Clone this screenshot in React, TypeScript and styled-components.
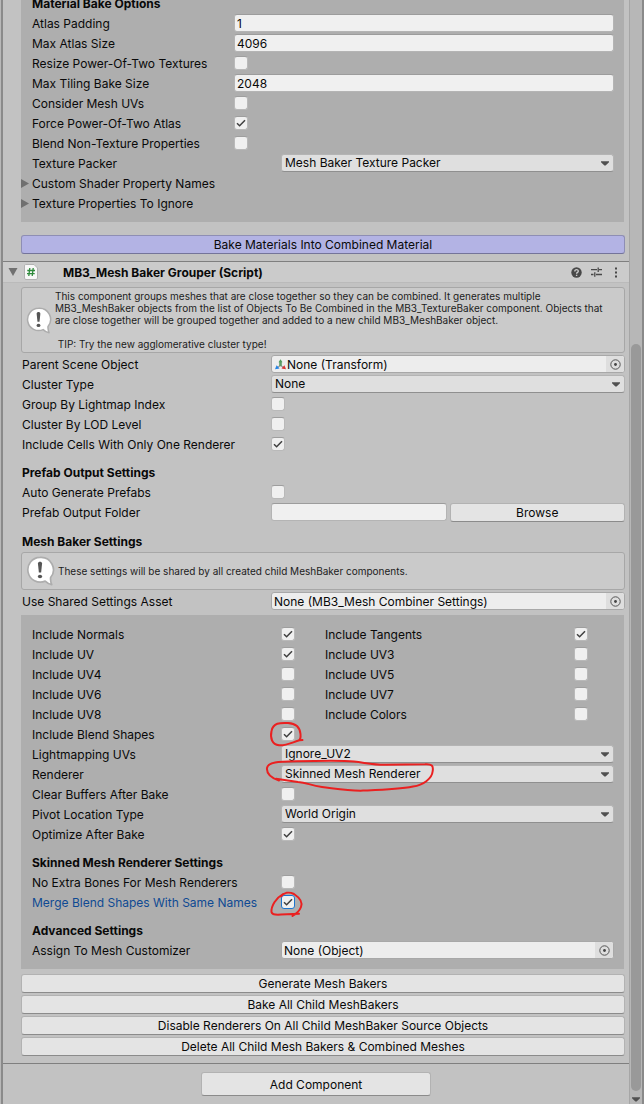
import React, { useId, useState } from "react";
import styled, { createGlobalStyle } from "styled-components";

const GlobalStyle = createGlobalStyle`
  * { box-sizing: border-box; }
  body {
    margin: 0;
    background: #c2c2c2;
    color: #090909;
    font: 12px/18px Inter, "Liberation Sans", sans-serif;
  }
  button, input, select { font: inherit; color: inherit; margin: 0; }
`;

const Window = styled.div`
  display: flex;
  min-height: 100vh;
  overflow: hidden;
  border-left: 1px solid #b8b8b8;
  border-right: 2px solid #8a8a8a;
`;

const Inspector = styled.main`
  flex: 1;
  min-width: 0;
  border-left: 2px solid #8a8a8a;
`;

const Component = styled.section<{ $scrolled?: boolean }>`
  display: flex;
  flex-direction: column;
  gap: 2px;
  margin-top: ${(p) => (p.$scrolled ? "-6px" : "0")};
  padding: 0 4px 7px 18px;
  border-bottom: 1px solid #7f7f7f;
`;

const Box = styled.div<{ $flushTop?: boolean }>`
  display: flex;
  flex-direction: column;
  gap: 2px;
  margin: ${(p) => (p.$flushTop ? "0 1px 11px 0" : "3px 1px 3px 0")};
  padding: ${(p) => (p.$flushTop ? "0 10px 10px 11px" : "10px 10px 10px 11px")};
  background: #aeaeae;
`;

const Loose = styled.div`
  display: flex;
  flex-direction: column;
  gap: 2px;
  padding-left: 1px;
`;

const Heading = styled.h3<{ $spaced?: boolean }>`
  height: 18px;
  margin: ${(p) => (p.$spaced ? "8px 0 0" : "0")};
  padding-top: 1px;
  font-size: 12px;
  font-weight: 700;
  white-space: nowrap;
`;

const Row = styled.div<{ $label?: number }>`
  display: grid;
  grid-template-columns: ${(p) => p.$label ?? 249}px minmax(0, 1fr);
  min-height: 18px;
`;

const Label = styled.label<{ $active?: boolean }>`
  height: 18px;
  padding-top: 1px;
  white-space: nowrap;
  color: ${(p) => (p.$active ? "#0f4a93" : "inherit")};
`;

const TextInput = styled.input`
  width: 100%;
  height: 18px;
  padding: 1px 2px 0;
  border: 1px solid #b4b4b4;
  border-top-color: #9c9c9c;
  border-radius: 3px;
  background: #f0f0f0;
  outline: none;
`;

const Stack = styled.span`
  position: relative;
  display: grid;
  align-items: center;
  justify-items: start;
  > input, > select, > svg { grid-area: 1 / 1; }
  > svg { pointer-events: none; }
`;

const TickInput = styled.input<{ $active?: boolean }>`
  appearance: none;
  width: 14px;
  height: 14px;
  border: 1px solid ${(p) => (p.$active ? "#1c75cf" : "#b9b9b9")};
  border-top-color: ${(p) => (p.$active ? "#1c75cf" : "#9e9e9e")};
  border-radius: 3px;
  background: #f0f0f0;
  outline: none;
`;

const SelectInput = styled.select`
  appearance: none;
  width: 100%;
  height: 18px;
  padding: 0 18px 0 3px;
  border: 1px solid #b4b4b4;
  border-bottom-color: #8f8f8f;
  border-radius: 3px;
  background: #dfdfdf;
  line-height: 16px;
  outline: none;
`;

const SelectArrow = styled.svg`
  justify-self: end;
  margin-right: 5px;
`;

const ObjectFrame = styled.span`
  display: flex;
  align-items: center;
  height: 18px;
  border: 1px solid #a8a8a8;
  border-radius: 3px;
  background: #ededed;
  padding-left: 2px;
  overflow: hidden;
`;

const ObjectInput = styled.input`
  flex: 1;
  min-width: 0;
  height: 16px;
  padding: 1px 0 0;
  border: 0;
  background: none;
  outline: none;
`;

const Picker = styled.button`
  display: grid;
  place-items: center;
  width: 18px;
  height: 16px;
  padding: 0;
  border: 0;
  background: #dedede;
`;

const PushButton = styled.button<{ $tone?: "bake" }>`
  width: 100%;
  height: 19px;
  padding: 0;
  border: 1px solid ${(p) => (p.$tone ? "#8e8eb4" : "#b2b2b2")};
  border-bottom-color: ${(p) => (p.$tone ? "#74749a" : "#8b8b8b")};
  border-radius: 3px;
  background: ${(p) => (p.$tone ? "#b3b3e4" : "#e4e4e4")};
  line-height: 17px;
  white-space: nowrap;
`;

const FolderFields = styled.div`
  display: grid;
  grid-template-columns: 1fr 1fr;
  gap: 3px;
`;

const Foldout = styled.button`
  display: flex;
  align-items: center;
  gap: 3px;
  height: 18px;
  margin-left: -11px;
  padding: 1px 0 0;
  border: 0;
  background: none;
  white-space: nowrap;
`;

const TitleBar = styled.header`
  display: flex;
  align-items: center;
  height: 21px;
  padding: 0 3px 0 5px;
  border-bottom: 1px solid #bababa;
  background: #cbcbcb;
`;

const Title = styled.h2`
  flex: 1;
  margin: 0;
  padding: 2px 0 0 25px;
  font-size: 12px;
  font-weight: 700;
  white-space: nowrap;
`;

const IconButton = styled.button`
  display: grid;
  place-items: center;
  width: 20px;
  height: 18px;
  padding: 0;
  border: 0;
  background: none;
`;

const FoldButton = styled(IconButton)`
  width: 10px;
  margin-right: 6px;
`;

const Help = styled.div<{ $tall?: boolean }>`
  display: flex;
  align-items: center;
  gap: 3px;
  height: ${(p) => (p.$tall ? "66px" : "38px")};
  margin-top: ${(p) => (p.$tall ? "4px" : "0")};
  padding: 0 3px;
  border: 1px solid #a7a7a7;
  border-radius: 3px;
  background: #cacaca;
`;

const HelpText = styled.p`
  margin: 0;
  color: #1c1c1c;
  font-size: 10px;
  line-height: 12px;
  white-space: pre;
`;

const Flags = styled.div`
  display: grid;
  grid-template-columns: 293px minmax(0, 1fr);
  gap: 2px 0;
`;

const Footer = styled.footer`
  display: flex;
  justify-content: center;
  padding: 8px 0;
`;

const AddButton = styled(PushButton)`
  width: 230px;
  height: 24px;
`;

const Track = styled.div`
  display: flex;
  flex-direction: column;
  align-items: center;
  width: 13px;
  border-left: 1px solid #a6a6a6;
  background: #b7b7b7;
`;

const TrackSpace = styled.div`
  flex: 344;
`;

const Thumb = styled.div`
  flex: 747;
  width: 10px;
  border-radius: 5px;
  background: #999;
`;

const TrackArrow = styled.div`
  display: grid;
  place-items: center;
  height: 13px;
  padding-top: 4px;
`;

const Mark = styled.svg`
  && {
    position: absolute;
    z-index: 1;
    left: -16px;
    top: -12px;
    overflow: visible;
    fill: none;
    stroke: #ea2020;
    stroke-width: 2;
    stroke-linecap: round;
    stroke-linejoin: round;
  }
`;

const DownArrow = () => (
  <svg width="8" height="5" viewBox="0 0 8 5" aria-hidden="true">
    <path d="M0 0.3h8v1L4.6 4.6h-1.2L0 1.3z" fill="#505050" />
  </svg>
);

const Bubble = ({ size }: { size: number }) => (
  <svg width={size} height={size} viewBox="0 0 30 32" aria-hidden="true">
    <path
      d="M15 1.5a13.2 13.2 0 1 0 5.5 25.3c2 2 4 3.2 7 3.7c-1-2.500-1.500-5-1.200-7.500A13.200 13.200 0 0 0 15 1.500z"
      fill="#fff"
      stroke="#adadad"
      strokeWidth="1.800"
      strokeLinejoin="round"
    />
    <path d="M12.800 8c0-2.600 4.400-2.600 4.400 0l-1 9.500h-2.400z" fill="#555" />
    <ellipse cx="15" cy="21.800" rx="2.300" ry="1.900" fill="#555" />
  </svg>
);

function Tick({ id, on, active }: { id: string; on?: boolean; active?: boolean }) {
  const [checked, setChecked] = useState(!!on);
  return (
    <>
      <TickInput
        id={id}
        type="checkbox"
        $active={active}
        checked={checked}
        onChange={(e) => setChecked(e.target.checked)}
      />
      {checked && (
        <svg width="14" height="14" viewBox="0 0 14 14" aria-hidden="true">
          <path d="M3 7.300l2.600 2.500L11 4.200" fill="none" stroke="#404040" strokeWidth="1.500" />
        </svg>
      )}
    </>
  );
}

interface ToggleProps {
  label: string;
  on?: boolean;
  active?: boolean;
  labelWidth?: number;
  mark?: React.ReactNode;
}

function Toggle({ label, on, active, labelWidth, mark }: ToggleProps) {
  const id = useId();
  return (
    <Row $label={labelWidth}>
      <Label htmlFor={id} $active={active}>{label}</Label>
      <Stack>
        <Tick id={id} on={on} active={active} />
        {mark}
      </Stack>
    </Row>
  );
}

function TextRow({ label, value, labelWidth }: { label: string; value: string; labelWidth?: number }) {
  const id = useId();
  return (
    <Row $label={labelWidth}>
      <Label htmlFor={id}>{label}</Label>
      <TextInput id={id} defaultValue={value} />
    </Row>
  );
}

function Dropdown({ label, value, mark }: { label: string; value: string; mark?: React.ReactNode }) {
  const id = useId();
  return (
    <Row>
      <Label htmlFor={id}>{label}</Label>
      <Stack>
        <SelectInput id={id} defaultValue={value}>
          <option>{value}</option>
        </SelectInput>
        <SelectArrow width="8" height="5" viewBox="0 0 8 5" aria-hidden="true">
          <path d="M0 0.300h8v1L4.600 4.600h-1.200L0 1.300z" fill="#505050" />
        </SelectArrow>
        {mark}
      </Stack>
    </Row>
  );
}

function ObjectRow({ label, value, icon }: { label: string; value: string; icon?: React.ReactNode }) {
  const id = useId();
  return (
    <Row>
      <Label htmlFor={id}>{label}</Label>
      <ObjectFrame>
        {icon}
        <ObjectInput id={id} value={value} readOnly />
        <Picker type="button" aria-label={`Select ${label}`}>
          <svg width="11" height="11" viewBox="0 0 11 11" aria-hidden="true">
            <circle cx="5.500" cy="5.500" r="4.700" fill="none" stroke="#555" />
            <circle cx="5.500" cy="5.500" r="1.400" fill="#444" />
          </svg>
        </Picker>
      </ObjectFrame>
    </Row>
  );
}

const FoldoutRow = ({ label }: { label: string }) => (
  <Foldout type="button">
    <svg width="8" height="9" viewBox="0 0 8 9" aria-hidden="true">
      <path d="M0 0v9l8-4.500z" fill="#707070" />
    </svg>
    {label}
  </Foldout>
);

const TransformIcon = () => (
  <svg width="13" height="13" viewBox="0 0 13 13" aria-hidden="true">
    <path d="M6.500 7.500L2.800 9.800" stroke="#9a9a9a" strokeWidth="1.400" />
    <path d="M6.500 7.500L10 9.800" stroke="#9a9a9a" strokeWidth="1.400" />
    <path d="M6.500 8V4" stroke="#5c9c67" strokeWidth="2.600" />
    <path d="M6.500 1.200l2 3h-4z" fill="#4e9a5b" />
    <path d="M1 11.300l1.600-4 2.900 3.200z" fill="#2384e6" />
    <path d="M12 11.300l-1.600-4-2.900 3.200z" fill="#d93434" />
  </svg>
);

const flags: [string, boolean][] = [
  ["Include Normals", true],
  ["Include Tangents", true],
  ["Include UV", true],
  ["Include UV3", false],
  ["Include UV4", false],
  ["Include UV5", false],
  ["Include UV6", false],
  ["Include UV7", false],
  ["Include UV8", false],
  ["Include Colors", false],
];

const actions = [
  "Generate Mesh Bakers",
  "Bake All Child MeshBakers",
  "Disable Renderers On All Child MeshBaker Source Objects",
  "Delete All Child Mesh Bakers & Combined Meshes",
];

const groupHelp = `This component groups meshes that are close together so they can be combined. It generates multiple
MB3_MeshBaker objects from the list of Objects To Be Combined in the MB3_TextureBaker component. Objects that
are close together will be grouped together and added to a new child MB3_MeshBaker object.

 TIP: Try the new agglomerative cluster type!`;

export default function App() {
  const folderId = useId();
  return (
    <>
      <GlobalStyle />
      <Window>
        <Inspector>
          <Component $scrolled>
            <Box $flushTop>
              <Heading>Material Bake Options</Heading>
              <TextRow label="Atlas Padding" value="1" labelWidth={202} />
              <TextRow label="Max Atlas Size" value="4096" labelWidth={202} />
              <Toggle label="Resize Power-Of-Two Textures" labelWidth={202} />
              <TextRow label="Max Tiling Bake Size" value="2048" labelWidth={202} />
              <Toggle label="Consider Mesh UVs" labelWidth={202} />
              <Toggle label="Force Power-Of-Two Atlas" on labelWidth={202} />
              <Toggle label="Blend Non-Texture Properties" labelWidth={202} />
              <Dropdown label="Texture Packer" value="Mesh Baker Texture Packer" />
              <FoldoutRow label="Custom Shader Property Names" />
              <FoldoutRow label="Texture Properties To Ignore" />
            </Box>
            <PushButton type="button" $tone="bake">Bake Materials Into Combined Material</PushButton>
          </Component>

          <TitleBar>
            <FoldButton type="button" aria-label="Collapse">
              <svg width="10" height="8" viewBox="0 0 10 8" aria-hidden="true">
                <path d="M0.500 0h9L5 8z" fill="#707070" />
              </svg>
            </FoldButton>
            <svg width="14" height="16" viewBox="0 0 14 16" aria-hidden="true">
              <path d="M1.500 0.500h8.500l3.500 3.500v10q0 1.500-1.500 1.500H2q-1.500 0-1.500-1.500V2q0-1.500 1-1.500z" fill="#f8f8f8" stroke="#b2b2b2" />
              <path d="M5.800 4l-1 8M9.200 4l-1 8M3.300 6.500h7.700M3 9.700h7.700" fill="none" stroke="#2f8a3c" strokeWidth="1.300" />
            </svg>
            <Title>MB3_Mesh Baker Grouper (Script)</Title>
            <IconButton type="button" aria-label="Help">
              <svg width="11" height="11" viewBox="0 0 11 11" aria-hidden="true">
                <circle cx="5.500" cy="5.500" r="5.200" fill="#484848" />
                <path d="M3.800 4.400c0-2.400 3.500-2.200 3.500-.2 0 1.300-1.700 1.100-1.700 2.500" fill="none" stroke="#cbcbcb" strokeWidth="1.300" />
                <path d="M4.900 7.700h1.400v1.300H4.900z" fill="#cbcbcb" />
              </svg>
            </IconButton>
            <IconButton type="button" aria-label="Presets">
              <svg width="11" height="10" viewBox="0 0 11 10" aria-hidden="true">
                <path d="M0 2.700h6M8 2.700h3M7.200 0.500v4.500M0 7.500h2.500M5 7.500h6M3.800 5.300v4.500" fill="none" stroke="#484848" strokeWidth="1.300" />
              </svg>
            </IconButton>
            <IconButton type="button" aria-label="Menu">
              <svg width="4" height="11" viewBox="0 0 4 11" aria-hidden="true">
                <path d="M1 0.500h2v2H1zM1 4.500h2v2H1zM1 8.500h2v2H1z" fill="#484848" />
              </svg>
            </IconButton>
          </TitleBar>

          <Component>
            <Help $tall>
              <Bubble size={27} />
              <HelpText>{groupHelp}</HelpText>
            </Help>
            <Loose>
              <ObjectRow label="Parent Scene Object" value="None (Transform)" icon={<TransformIcon />} />
              <Dropdown label="Cluster Type" value="None" />
              <Toggle label="Group By Lightmap Index" />
              <Toggle label="Cluster By LOD Level" />
              <Toggle label="Include Cells With Only One Renderer" on />
              <Heading $spaced>Prefab Output Settings</Heading>
              <Toggle label="Auto Generate Prefabs" />
              <Row>
                <Label htmlFor={folderId}>Prefab Output Folder</Label>
                <FolderFields>
                  <TextInput id={folderId} />
                  <PushButton type="button">Browse</PushButton>
                </FolderFields>
              </Row>
              <Heading $spaced>Mesh Baker Settings</Heading>
            </Loose>
            <Help>
              <Bubble size={30} />
              <HelpText>These settings will be shared by all created child MeshBaker components.</HelpText>
            </Help>
            <Loose>
              <ObjectRow label="Use Shared Settings Asset" value="None (MB3_Mesh Combiner Settings)" />
            </Loose>
            <Box>
              <Flags>
                {flags.map(([label, on]) => (
                  <Toggle key={label} label={label} on={on} />
                ))}
              </Flags>
              <Toggle
                label="Include Blend Shapes"
                on
                mark={
                  <Mark width="48" height="44" viewBox="265 713 48 44">
                    <path d="M302.500 740l-3 .3C293 742 286 746 279 745.300C272 744.500 270 738 271.500 731C273 723 280 722.500 288 723C296 723.500 300 728 300.500 734C301 739 300 740 298.500 740.500" />
                  </Mark>
                }
              />
              <Dropdown label="Lightmapping UVs" value="Ignore_UV2" />
              <Dropdown
                label="Renderer"
                value="Skinned Mesh Renderer"
                mark={
                  <Mark width="180" height="44" viewBox="265 753 180 44">
                    <path d="M279 780.500C270 777.500 266.500 773 267 768C268 762 278 761.700 296 761.300C318 760.700 342 760.200 354 761.500C368 763.300 374 765 386 764.800L425 764.300C432 763.800 433.500 766 432.700 771C432 779 423 785 413 786.500C398 789.500 378 790 363 790.600C348 791 335 788.500 322 787C310 785.500 307 782.500 298 782L276 778.700" />
                  </Mark>
                }
              />
              <Toggle label="Clear Buffers After Bake" />
              <Dropdown label="Pivot Location Type" value="World Origin" />
              <Toggle label="Optimize After Bake" on />
              <Heading $spaced>Skinned Mesh Renderer Settings</Heading>
              <Toggle label="No Extra Bones For Mesh Renderers" />
              <Toggle
                label="Merge Blend Shapes With Same Names"
                on
                active
                mark={
                  <Mark width="48" height="44" viewBox="265 881 48 44">
                    <path d="M281 896.500C284 892.500 289 891.500 294 894C300 898 302.500 903 301 907C299.500 911 296 914 292.500 916M283 894C276 898 271 906 271.500 912C272 915 276 915 281 914.600L299 913.700" />
                  </Mark>
                }
              />
              <Heading $spaced>Advanced Settings</Heading>
              <ObjectRow label="Assign To Mesh Customizer" value="None (Object)" />
            </Box>
            {actions.map((action) => (
              <PushButton key={action} type="button">{action}</PushButton>
            ))}
          </Component>
          <Footer>
            <AddButton type="button">Add Component</AddButton>
          </Footer>
        </Inspector>
        <Track aria-hidden="true">
          <TrackSpace />
          <Thumb />
          <TrackArrow><DownArrow /></TrackArrow>
        </Track>
      </Window>
    </>
  );
}
